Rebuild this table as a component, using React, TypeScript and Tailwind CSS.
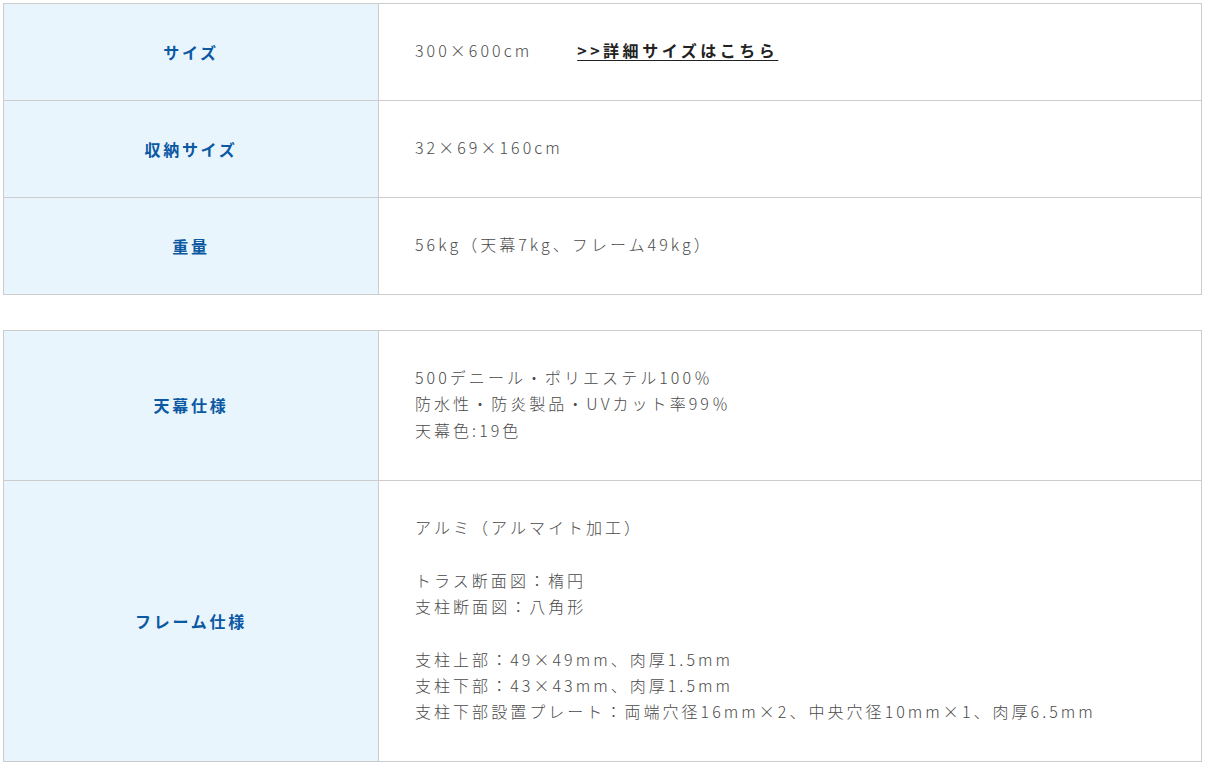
import React from "react";

type Row = { label: string; lines: React.ReactNode[] };

const font = { fontFamily: '"Noto Sans CJK JP", "Noto Sans", sans-serif' };

function SpecTable({ rows }: { rows: Row[] }) {
  return (
    <table className="w-full border-collapse border border-[#cccccc]" style={font}>
      <tbody>
        {rows.map((r, i) => (
          <tr key={i}>
            <th className="w-[375px] border border-[#cccccc] bg-[#e9f5fc] py-[33px] text-center text-[16px] font-bold leading-[26px] tracking-[0.17em] text-[#0b58a3]">
              {r.label}
            </th>
            <td className="border border-[#cccccc] bg-white pt-[33px] pb-[36.6px] pl-[36px] pr-4 text-left text-[16px] font-light tracking-[0.19em] text-[#4a4a4a]">
              {r.lines.map((l, j) => (
                <div key={j} className="h-[26.4px] overflow-visible whitespace-nowrap leading-[26.4px]">
                  {l}
                </div>
              ))}
            </td>
          </tr>
        ))}
      </tbody>
    </table>
  );
}

export default function App() {
  const t1: Row[] = [
    {
      label: "サイズ",
      lines: [
        <span>
          300×600cm
          <a href="#" className="ml-[45px] font-bold tracking-[0.22em] text-[#222222] underline underline-offset-[3px]">
            &gt;&gt;詳細サイズはこちら
          </a>
        </span>,
      ],
    },
    { label: "収納サイズ", lines: ["32×69×160cm"] },
    { label: "重量", lines: ["56kg（天幕7kg、フレーム49kg）"] },
  ];
  const t2: Row[] = [
    {
      label: "天幕仕様",
      lines: ["500デニール・ポリエステル100％", "防水性・防炎製品・UVカット率99％", "天幕色:19色"],
    },
    {
      label: "フレーム仕様",
      lines: [
        "アルミ（アルマイト加工）",
        "",
        "トラス断面図：楕円",
        "支柱断面図：八角形",
        "",
        "支柱上部：49×49mm、肉厚1.5mm",
        "支柱下部：43×43mm、肉厚1.5mm",
        "支柱下部設置プレート：両端穴径16mm×2、中央穴径10mm×1、肉厚6.5mm",
      ],
    },
  ];
  return (
    <div className="min-h-[767px] bg-white px-[3px] pt-[3px]">
      <SpecTable rows={t1} />
      <div className="h-[35px]" />
      <SpecTable rows={t2} />
    </div>
  );
}
